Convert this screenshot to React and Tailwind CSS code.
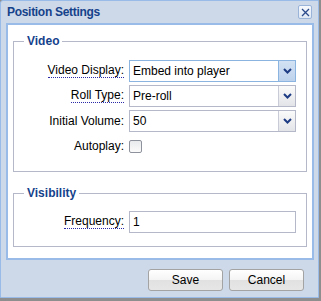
const font = { fontFamily: '"Liberation Sans", Arial, sans-serif' };

function Chevron() {
  return (
    <svg width="9" height="6" viewBox="0 0 9 6">
      <path d="M1 1 L4.5 4.5 L8 1" fill="none" stroke="#1e3c84" strokeWidth="2" />
    </svg>
  );
}

function Combo({ value, focused }) {
  return (
    <div
      className={`flex h-[22px] w-[167px] border ${
        focused ? "border-[#8bb4e0]" : "border-[#b5b8c8]"
      } bg-white`}
    >
      <div className="flex flex-1 items-center pl-[3px] text-[12px] text-black">{value}</div>
      <div
        className={`flex w-[17px] items-center justify-center border-l ${
          focused
            ? "border-[#8bb4e0] bg-gradient-to-b from-[#d3e2f4] to-[#bdd2ec]"
            : "border-[#c9cbd6] bg-gradient-to-b from-[#fbfbfb] to-[#e3e4e8]"
        }`}
      >
        <Chevron />
      </div>
    </div>
  );
}

function Label({ text, tip }) {
  return (
    <div className="flex w-[115px] justify-end pr-[5px] text-[12px] text-black">
      <span className={tip ? "border-b border-dotted border-[#2a2aa8] leading-[13px]" : "leading-[13px]"}>
        {text}
      </span>
    </div>
  );
}

function Button({ children }) {
  return (
    <button className="flex h-[22px] w-[75px] items-center justify-center rounded-[3px] border border-[#a3a3a3] bg-[linear-gradient(#ffffff_0%,#f4f4f4_50%,#e1e1e1_51%,#e6e6e6_100%)] text-[12px] text-black">
      {children}
    </button>
  );
}

export default function App() {
  return (
    <div className="h-[301px] w-[321px] bg-[#8e8e8e]" style={font}>
      <div className="flex h-[298px] w-[319px] flex-col rounded-tl-[3px] border border-[#99bbe8] bg-[#cdd9e8]">
        <div className="flex h-[22px] items-center justify-between pl-[6px] pr-[6px]">
          <span className="text-[12px] font-bold tracking-[-0.3px] text-[#15428b]">Position Settings</span>
          <div className="flex h-[14px] w-[14px] items-center justify-center rounded-[2px] border border-[#9ab4d9] bg-gradient-to-b from-[#f6f9fd] to-[#dfe8f4]">
            <svg width="9" height="9" viewBox="0 0 9 9">
              <path d="M1 1 L8 8 M8 1 L1 8" stroke="#2b4a8c" strokeWidth="1.3" />
            </svg>
          </div>
        </div>
        <div className="ml-[5px] mr-[4px] flex h-[237px] flex-col border-2 border-[#99bbe8] bg-white px-[5px] pt-[9px]">
          <fieldset className="h-[138px] border border-[#b5b8c8] px-0">
            <legend className="ml-[10px] px-[3px] text-[12px] font-bold leading-[14px] text-[#15428b]">Video</legend>
            <div className="mt-[12px] flex flex-col gap-[3px]">
              <div className="flex items-center">
                <Label text="Video Display:" tip />
                <Combo value="Embed into player" focused />
              </div>
              <div className="flex items-center">
                <Label text="Roll Type:" tip />
                <Combo value="Pre-roll" />
              </div>
              <div className="flex items-center">
                <Label text="Initial Volume:" />
                <Combo value="50" />
              </div>
              <div className="flex h-[22px] items-center">
                <Label text="Autoplay:" />
                <div className="h-[13px] w-[13px] rounded-[2px] border border-[#8e929c] bg-gradient-to-b from-[#e9eaec] to-[#fbfbfb]" />
              </div>
            </div>
          </fieldset>
          <fieldset className="mt-[14px] h-[61px] border border-[#b5b8c8] px-0">
            <legend className="ml-[10px] px-[3px] text-[12px] font-bold leading-[14px] text-[#15428b]">Visibility</legend>
            <div className="mt-[11px] flex items-center">
              <Label text="Frequency:" tip />
              <div className="flex h-[22px] w-[167px] items-center border border-[#b5b8c8] bg-white pl-[3px] text-[12px] text-black">
                1
              </div>
            </div>
          </fieldset>
        </div>
        <div className="flex justify-end gap-[6px] pr-[14px] pt-[9px]">
          <Button>Save</Button>
          <Button>Cancel</Button>
        </div>
      </div>
    </div>
  );
}
